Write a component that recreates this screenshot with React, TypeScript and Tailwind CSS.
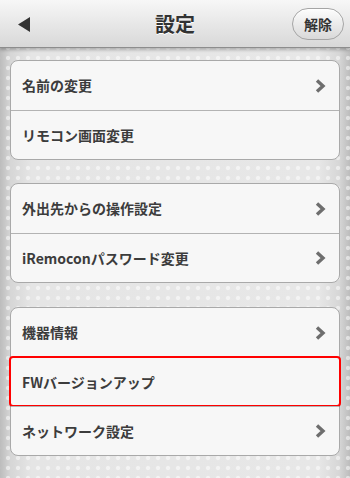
type Row = { label: string; arrow: boolean; highlight?: boolean }

const groups: Row[][] = [
  [
    { label: '名前の変更', arrow: true },
    { label: 'リモコン画面変更', arrow: false },
  ],
  [
    { label: '外出先からの操作設定', arrow: true },
    { label: 'iRemoconパスワード変更', arrow: true },
  ],
  [
    { label: '機器情報', arrow: true },
    { label: 'FWバージョンアップ', arrow: false, highlight: true },
    { label: 'ネットワーク設定', arrow: true },
  ],
]

function Chevron() {
  return (
    <svg width="11" height="14" viewBox="0 0 11 14" className="mr-[1px]">
      <polyline points="2,1.5 8,7 2,12.5" fill="none" stroke="#6e6e6e" strokeWidth="3.4" strokeLinejoin="miter" />
    </svg>
  )
}

function Group({ rows, className }: { rows: Row[]; className?: string }) {
  return (
    <div className={`mx-[10px] rounded-[8px] border border-[#a9a9a9] bg-[#f7f7f7] ${className || ''}`}>
      {rows.map((r, i) => (
        <div
          key={r.label}
          className={`relative flex h-[49px] items-center pl-[11px] pr-[12px] ${i > 0 ? 'border-t border-[#b3b3b3]' : ''}`}
        >
          <span className="flex-1 text-[14px] font-bold text-[#3c3c3c]">{r.label}</span>
          {r.arrow && <Chevron />}
          {r.highlight && (
            <span className="absolute -left-[2px] -right-[2px] -top-[2px] -bottom-[1px] rounded-[4px] border-2 border-[#ff0000]" />
          )}
        </div>
      ))}
    </div>
  )
}

export default function App() {
  return (
    <div
      className="h-[478px] w-[350px] overflow-hidden bg-[image:radial-gradient(circle,rgba(255,255,255,0.5)_1.6px,transparent_2.6px),linear-gradient(to_right,#bcbcbc,#d6d6d6_3%,#e5e5e5_9%,#e7e7e7_91%,#d6d6d6_97%,#bcbcbc)] bg-[length:10px_10px,100%_100%] bg-[position:3px_3px,0_0]"
      style={{ fontFamily: '"Noto Sans CJK JP", "Liberation Sans", sans-serif' }}
    >
      {/* ヘッダー */}
      <div className="relative flex h-[48px] items-center justify-center border-b border-[#8d8d8d] bg-gradient-to-b from-[#f7f7f7] to-[#d8d8d8] shadow-[0_2px_3px_rgba(0,0,0,0.25)]">
        <svg className="absolute left-[18px] top-[17px]" width="12" height="15" viewBox="0 0 12 15">
          <polygon points="12,0 12,15 0,7.5" fill="#333" />
        </svg>
        <h1 className="text-[20px] font-bold text-[#333] [text-shadow:0_1px_0_#fff]">設定</h1>
        <button className="absolute right-[6px] top-[8px] h-[32px] w-[52px] rounded-full border border-[#a5a5a5] bg-gradient-to-b from-[#fdfdfd] to-[#d9d9d9] text-[14px] font-bold text-[#333] shadow-[inset_0_1px_0_#fff]">
          解除
        </button>
      </div>

      <Group rows={groups[0]} className="mt-[12px]" />
      <Group rows={groups[1]} className="mt-[23px]" />
      <Group rows={groups[2]} className="mt-[24px]" />
    </div>
  )
}
